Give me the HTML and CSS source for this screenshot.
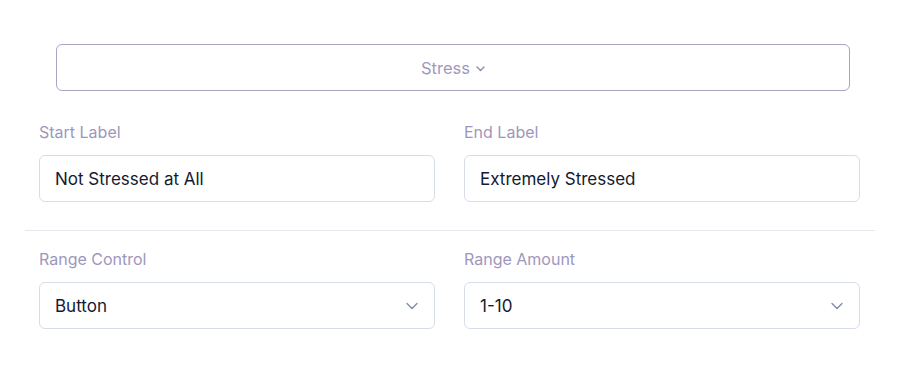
FILE: index.html
```html
<!DOCTYPE html>
<html lang="en">
<head>
<meta charset="utf-8">
<title>Scale settings</title>
<link rel="stylesheet" href="styles.css">
</head>
<body>
<div class="panel">
  <button class="preset" type="button">
    <span>Stress</span>
    <svg class="chev-sm" width="9" height="6" viewBox="0 0 9 6"><path d="M1 1l3.5 3.5L8 1" fill="none" stroke="currentColor" stroke-width="1.4" stroke-linecap="round" stroke-linejoin="round"/></svg>
  </button>
  <div class="row">
    <div class="field">
      <label class="label">Start Label</label>
      <div class="input">Not Stressed at All</div>
    </div>
    <div class="field">
      <label class="label">End Label</label>
      <div class="input">Extremely Stressed</div>
    </div>
  </div>
  <hr class="divider">
  <div class="row">
    <div class="field">
      <label class="label">Range Control</label>
      <div class="input select"><span>Button</span>
        <svg class="chev" width="12" height="8" viewBox="0 0 12 8"><path d="M1 1.5l5 5 5-5" fill="none" stroke="currentColor" stroke-width="1.3" stroke-linecap="round" stroke-linejoin="round"/></svg>
      </div>
    </div>
    <div class="field">
      <label class="label">Range Amount</label>
      <div class="input select"><span>1-10</span>
        <svg class="chev" width="12" height="8" viewBox="0 0 12 8"><path d="M1 1.5l5 5 5-5" fill="none" stroke="currentColor" stroke-width="1.3" stroke-linecap="round" stroke-linejoin="round"/></svg>
      </div>
    </div>
  </div>
</div>
</body>
</html>
```
FILE: styles.css
```css
* { box-sizing: border-box; }
body {
  margin: 0;
  background: #fff;
  font-family: "Inter", "Noto Sans", sans-serif;
}
.panel {
  width: 850px;
  margin-left: 25px;
  padding-top: 44px;
}
.preset {
  display: flex;
  align-items: center;
  justify-content: center;
  gap: 6px;
  width: 794px;
  height: 47px;
  margin-left: 31px;
  background: #fff;
  border: 1.5px solid #a9a3c4;
  border-radius: 6px;
  color: #9f99bd;
  font-family: inherit;
  font-size: 16.5px;
  padding: 0;
}
.chev-sm { margin-top: 2px; color: #8f89b3; }
.row {
  display: grid;
  grid-template-columns: 1fr 1fr;
  column-gap: 29px;
  padding: 0 15px 0 14px;
}
.preset + .row { margin-top: 30px; }
.field { display: flex; flex-direction: column; }
.label {
  font-size: 16px;
  line-height: 22px;
  color: #9e97bc;
  margin-bottom: 12px;
}
.input {
  height: 47px;
  border: 1px solid #d6dde8;
  border-radius: 6px;
  display: flex;
  align-items: center;
  padding: 0 16px 0 15px;
  font-size: 17px;
  color: #141a31;
}
.select { justify-content: space-between; }
.chev { color: #7e88a6; }
.divider {
  border: 0;
  border-top: 1px solid #e6e8f0;
  margin: 28px 0 17px;
}
```
